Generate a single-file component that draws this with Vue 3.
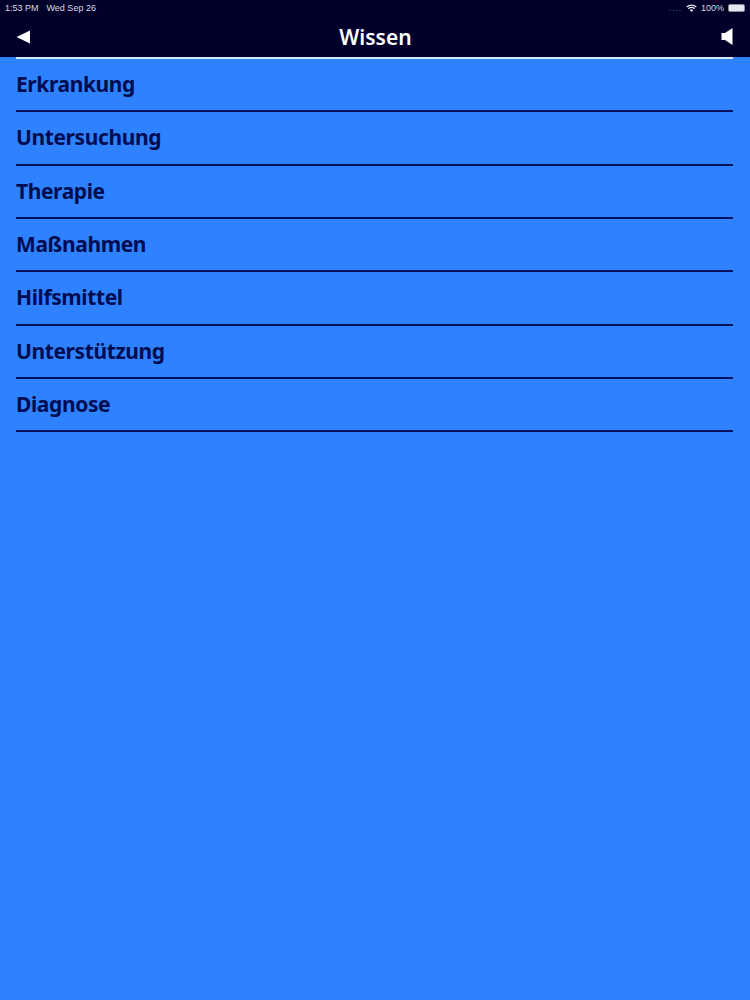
<script setup>
const items = ['Erkrankung', 'Untersuchung', 'Therapie', 'Maßnahmen', 'Hilfsmittel', 'Unterstützung', 'Diagnose']
</script>

<template>
  <div class="page">
    <header class="top">
      <div class="status">
        <div class="status-left">
          <span>1:53 PM</span>
          <span>Wed Sep 26</span>
        </div>
        <div class="status-right">
          <span class="signal">....</span>
          <svg class="wifi" width="11" height="8" viewBox="0 0 11 8">
            <path d="M0.3 2.6a7.4 7.4 0 0 1 10.4 0l-0.9 1a6 6 0 0 0-8.6 0z" fill="#e8e8f0" />
            <path d="M2 4.3a5 5 0 0 1 7 0l-0.9 1a3.7 3.7 0 0 0-5.2 0z" fill="#e8e8f0" />
            <path d="M3.7 6a2.6 2.6 0 0 1 3.6 0l-1.8 2z" fill="#e8e8f0" />
          </svg>
          <span>100%</span>
          <span class="battery"></span>
        </div>
      </div>
      <div class="nav">
        <svg width="14" height="14" viewBox="0 0 14 14" class="nav-icon">
          <path d="M0.5 7L14 0.5V13.5Z" fill="#fff" />
        </svg>
        <h1 class="title">Wissen</h1>
        <svg width="12" height="17" viewBox="0 0 12 17" class="nav-icon">
          <path d="M0.5 5H4L11.5 0V17L4 12H0.5Z" fill="#fff" />
        </svg>
      </div>
    </header>
    <ul class="list">
      <li v-for="item in items" :key="item" class="row">{{ item }}</li>
    </ul>
  </div>
</template>

<style scoped>
.page {
  width: 750px;
  height: 1000px;
  background: #2e82ff;
  font-family: "Noto Sans", sans-serif;
  overflow: hidden;
}
.top {
  height: 57px;
  background: #00002a;
}
.status {
  height: 15px;
  padding: 0 5px;
  display: flex;
  justify-content: space-between;
  align-items: center;
  font-family: "Liberation Sans", sans-serif;
  font-size: 9px;
  color: #dcdce6;
}
.status-left {
  display: flex;
  gap: 8px;
}
.status-right {
  display: flex;
  align-items: center;
  gap: 4px;
}
.signal {
  color: #6a6a80;
  letter-spacing: 0.8px;
}
.battery {
  width: 15px;
  height: 6px;
  border-radius: 2px;
  background: #e8e8f0;
  border: 1px solid #8a8a9a;
}
.nav {
  height: 41px;
  padding-top: 1px;
  margin: 0 17px 0 16px;
  display: flex;
  align-items: center;
  justify-content: space-between;
  border-bottom: 2px solid #d8e6fa;
}
.nav-icon {
  display: block;
}
.title {
  margin: 0;
  font-size: 21px;
  font-weight: 600;
  color: #fff;
}
.list {
  list-style: none;
  margin: 2px 17px 0 16px;
  padding: 0;
}
.row {
  height: 51.35px;
  line-height: 50px;
  border-bottom: 2px solid #00125c;
  font-size: 21px;
  font-weight: 700;
  letter-spacing: -0.4px;
  color: #000c50;
}
</style>
